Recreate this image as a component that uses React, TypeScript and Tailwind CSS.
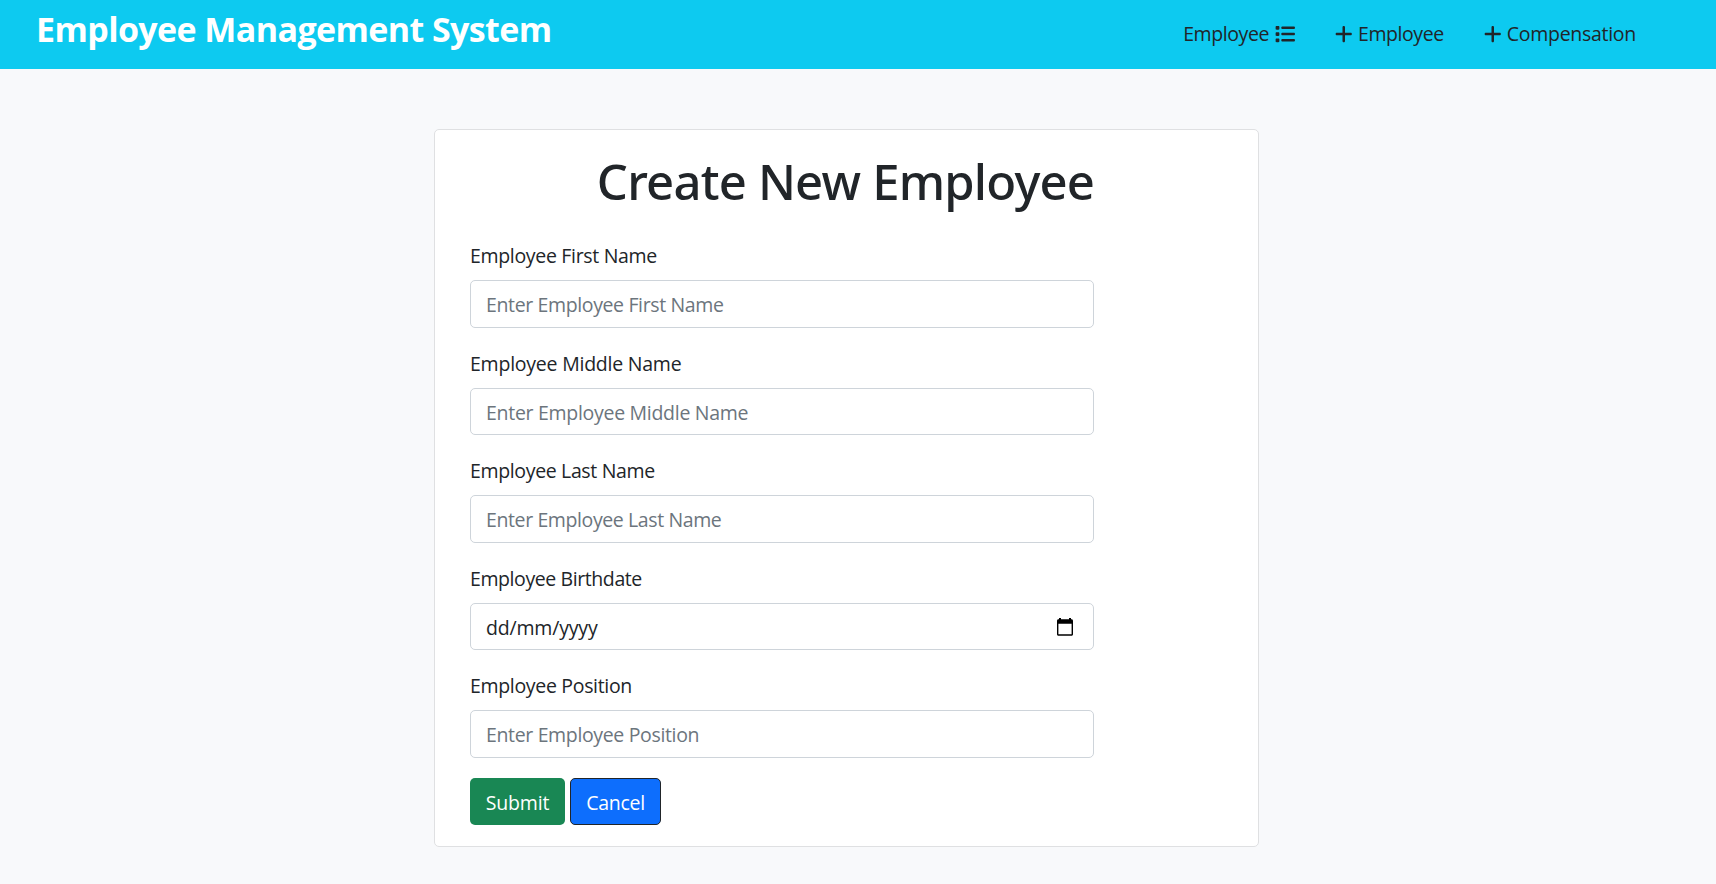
import { FaList, FaPlus } from 'react-icons/fa6';

type Field = {
  id: string;
  label: string;
  labelClass: string;
  placeholder: string;
  inputClass: string;
  date?: boolean;
};

const fields: Field[] = [
  { id: 'first', label: 'Employee First Name', labelClass: 'tracking-[-0.32px]', placeholder: 'Enter Employee First Name', inputClass: 'pt-[1px] tracking-[-0.37px]' },
  { id: 'middle', label: 'Employee Middle Name', labelClass: 'tracking-[-0.23px]', placeholder: 'Enter Employee Middle Name', inputClass: 'pt-[3px] tracking-[-0.29px]' },
  { id: 'last', label: 'Employee Last Name', labelClass: 'tracking-[-0.35px]', placeholder: 'Enter Employee Last Name', inputClass: 'pt-[1px] tracking-[-0.39px]' },
  { id: 'birthdate', label: 'Employee Birthdate', labelClass: 'tracking-[-0.41px]', placeholder: 'dd/mm/yyyy', inputClass: 'pt-[3px] tracking-[-0.18px]', date: true },
  { id: 'position', label: 'Employee Position', labelClass: 'tracking-[-0.32px]', placeholder: 'Enter Employee Position', inputClass: 'pt-[1px] tracking-[-0.35px]' },
];

function CalendarIcon() {
  return (
    <svg viewBox="0 0 16 18" className="mr-[5px] mb-[2px] h-[18px] w-[16px]" fill="#000">
      <path d="M2 0h2v1.300h8V0h2v1.300h.5C15.400 1.300 16 2 16 2.900V16.300c0 .9-.6 1.500-1.500 1.500h-13C.6 17.800 0 17.200 0 16.300V2.900C0 2 .6 1.300 1.500 1.300H2V0Zm-.6 5.700v10.500h13.200V5.700H1.400Z" fillRule="evenodd" />
    </svg>
  );
}

function FormField({ field }: { field: Field }) {
  const box = 'flex h-[47.5px] w-[624px] items-center rounded-[5px] border border-[#ced4da] bg-white px-[15px]';
  return (
    <div className="flex flex-col">
      <label htmlFor={field.id} className={`mb-[10px] h-[30px] leading-[32px] ${field.labelClass}`}>
        {field.label}
      </label>
      {field.date ? (
        <div id={field.id} className={`${box} justify-between ${field.inputClass}`}>
          <span>{field.placeholder}</span>
          <CalendarIcon />
        </div>
      ) : (
        <input id={field.id} placeholder={field.placeholder} className={`${box} placeholder:text-[#6c757d] ${field.inputClass}`} />
      )}
    </div>
  );
}

export default function App() {
  return (
    <div className="flex min-h-[884px] flex-col bg-[#f8f9fb] font-['Open_Sans','Noto_Sans',sans-serif] text-[19.5px] text-[#212529]">
      <header className="flex h-[69px] items-start justify-between bg-[#0dcaf0] pr-[80px] pl-[36px]">
        <h1 className="mt-[4px] text-[34px] leading-[50px] font-bold tracking-[-0.6px] text-white">
          Employee Management System
        </h1>
        <nav className="mt-[19px] flex h-[30px] items-center gap-[40.5px] leading-[30px]">
          <a className="flex items-center gap-[6px]">
            <span className="tracking-[-0.42px]">Employee</span>
            <FaList className="size-5" />
          </a>
          <a className="flex items-center gap-[5px]">
            <FaPlus className="h-5 w-[17.5px]" />
            <span className="tracking-[-0.42px]">Employee</span>
          </a>
          <a className="flex items-center gap-[5px]">
            <FaPlus className="h-5 w-[17.5px]" />
            <span className="tracking-[-0.28px]">Compensation</span>
          </a>
        </nav>
      </header>

      <main className="mt-[60px] ml-[434px] flex h-[718px] w-[825px] flex-col rounded-[5px] border border-[#dfe0e2] bg-white px-[35px]">
        <h2 className="mt-[21px] mb-[29px] h-[60px] pr-[2px] text-center font-['Noto_Sans','Open_Sans',sans-serif] text-[49px] leading-[60px] font-medium tracking-[-0.8px]">
          Create New Employee
        </h2>
        <form className="flex flex-col gap-5">
          {fields.map((field) => (
            <FormField key={field.id} field={field} />
          ))}
          <div className="flex h-[47.5px] gap-[5px] text-white">
            <button type="button" className="w-[95px] rounded-[5px] bg-[#198754] pt-[2px] tracking-[-0.2px]">
              Submit
            </button>
            <button type="button" className="w-[91px] rounded-[5px] border border-[#212529] bg-[#0d6efd] pt-[2px] tracking-[-0.26px]">
              Cancel
            </button>
          </div>
        </form>
      </main>
    </div>
  );
}
